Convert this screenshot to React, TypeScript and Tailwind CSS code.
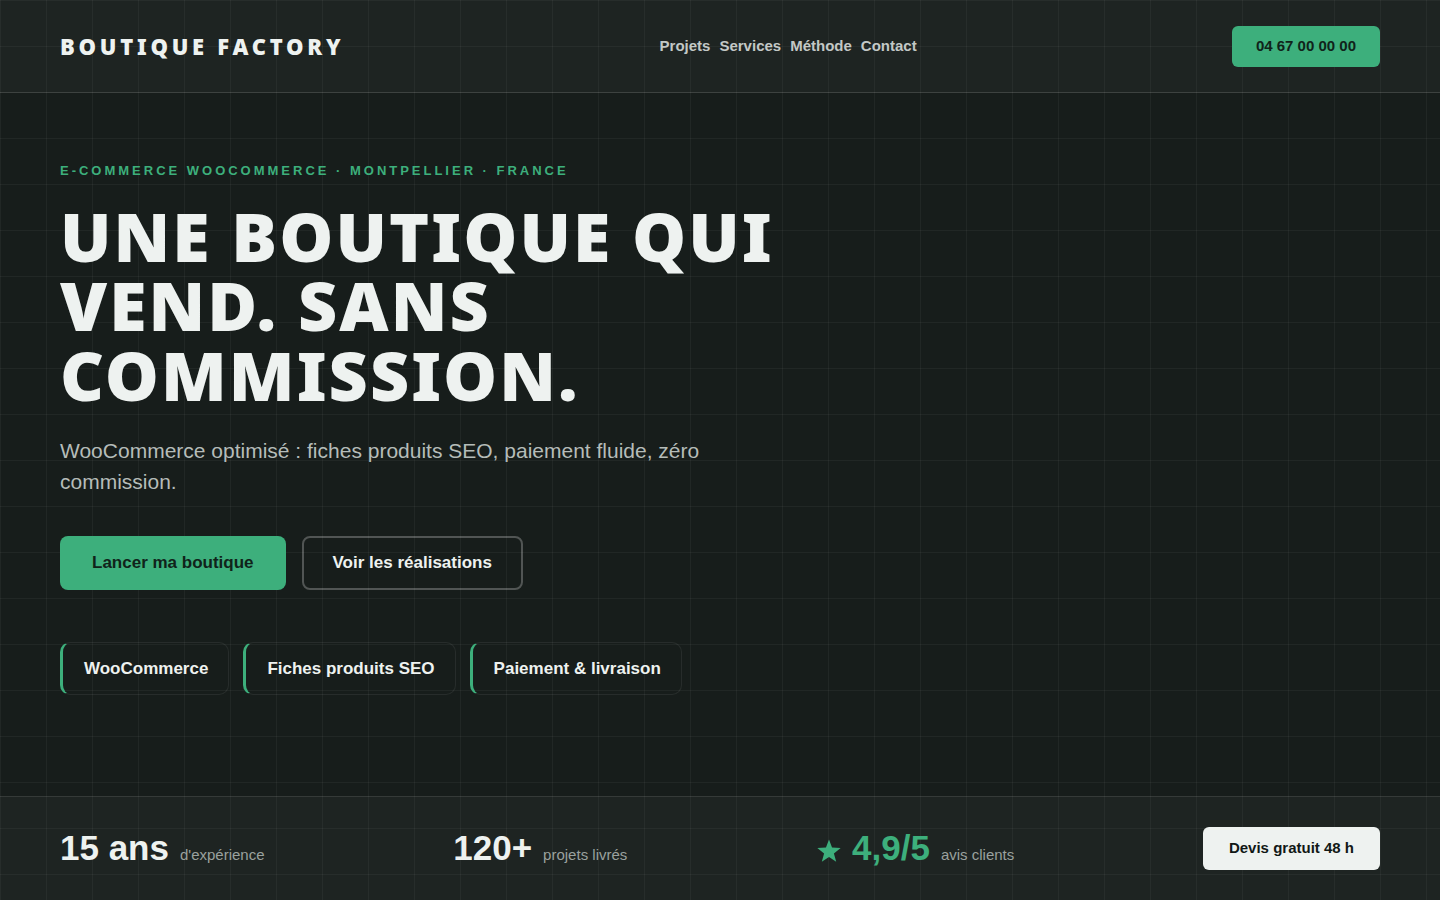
import React from 'react';

const NAV_LINKS = ['Projets', 'Services', 'Méthode', 'Contact'];
const CHIPS = ['WooCommerce', 'Fiches produits SEO', 'Paiement & livraison'];

function Star() {
  return (
    <svg width="26" height="24" viewBox="0 0 24 23" className="self-center translate-y-[2px]" aria-hidden="true">
      <polygon
        points="12,0.5 14.9,8.2 23.2,8.6 16.7,13.8 18.9,21.8 12,17.3 5.1,21.8 7.3,13.8 0.8,8.6 9.1,8.2"
        fill="#3daf7c"
      />
    </svg>
  );
}

function Stat({ value, label, accent }: { value: React.ReactNode; label: string; accent?: boolean }) {
  return (
    <div className="flex items-baseline gap-[11px]">
      <span className={`text-[35px] font-bold leading-none ${accent ? 'text-[#3daf7c]' : 'text-[#eef2f0]'}`}>
        {value}
      </span>
      <span className="text-[15px] text-[#9aa19e]">{label}</span>
    </div>
  );
}

export default function App() {
  return (
    <div className="h-screen flex flex-col overflow-hidden bg-[#171d1b] bg-[linear-gradient(to_right,rgba(255,255,255,0.045)_1px,transparent_1px),linear-gradient(to_bottom,rgba(255,255,255,0.045)_1px,transparent_1px)] bg-[size:46px_46px] font-['Liberation_Sans',Arial,sans-serif] text-[#eef2f0]">

      {/* Header */}
      <header className="h-[93px] flex-shrink-0 flex items-center justify-between px-[60px] bg-white/[0.03] border-b border-white/10">
        <div className="font-['Noto_Sans',sans-serif] font-black text-[22px] leading-none tracking-[0.17em] text-[#eef2f0]">
          BOUTIQUE FACTORY
        </div>
        <nav className="flex items-center gap-[9px] text-[15px] font-bold text-[#c3c8c6]">
          {NAV_LINKS.map(l => (
            <a key={l} href="#" className="hover:text-white">{l}</a>
          ))}
        </nav>
        <a href="#" className="h-[41px] px-6 flex items-center rounded-md bg-[#3daf7c] text-[15px] font-bold text-[#10231a]">
          04 67 00 00 00
        </a>
      </header>

      {/* Hero */}
      <main className="flex-1 px-[60px] pt-[70px]">
        <div className="text-[13px] leading-4 font-bold tracking-[0.23em] text-[#3daf7c]">
          E-COMMERCE WOOCOMMERCE · MONTPELLIER · FRANCE
        </div>
        <h1 className="mt-[22px] max-w-[860px] font-['Noto_Sans',sans-serif] font-black text-[68px] leading-[1.02] tracking-[0.03em] text-[#eef2f0]">
          UNE BOUTIQUE QUI VEND. SANS COMMISSION.
        </h1>
        <p className="mt-[26px] max-w-[680px] text-[21px] leading-[31px] text-[#b5bcb9]">
          WooCommerce optimisé : fiches produits SEO, paiement fluide, zéro commission.
        </p>
        <div className="mt-[39px] flex gap-4">
          <a href="#" className="h-[54px] px-8 flex items-center rounded-lg bg-[#3daf7c] text-[17px] font-bold text-[#10231a]">
            Lancer ma boutique
          </a>
          <a href="#" className="h-[54px] px-[29px] flex items-center rounded-lg border-2 border-white/25 text-[17px] font-bold text-[#eef2f0]">
            Voir les réalisations
          </a>
        </div>
        <div className="mt-[52px] flex gap-[14px]">
          {CHIPS.map(c => (
            <div
              key={c}
              className="h-[53px] pl-[21px] pr-5 flex items-center rounded-[10px] border border-white/[0.07] border-l-[3px] border-l-[#3daf7c] text-[17px] font-bold text-[#eef2f0]"
            >
              {c}
            </div>
          ))}
        </div>
      </main>

      {/* Stats bar */}
      <footer className="flex-shrink-0 flex items-center justify-between px-[60px] py-[30px] bg-white/[0.03] border-t border-white/10">
        <Stat value="15 ans" label="d'expérience" />
        <Stat value="120+" label="projets livrés" />
        <div className="flex items-baseline gap-[10px]">
          <Star />
          <Stat value="4,9/5" label="avis clients" accent />
        </div>
        <a href="#" className="h-[43px] px-[26px] flex items-center rounded-md bg-[#eef2f0] text-[15px] font-bold text-[#111816]">
          Devis gratuit 48 h
        </a>
      </footer>
    </div>
  );
}
